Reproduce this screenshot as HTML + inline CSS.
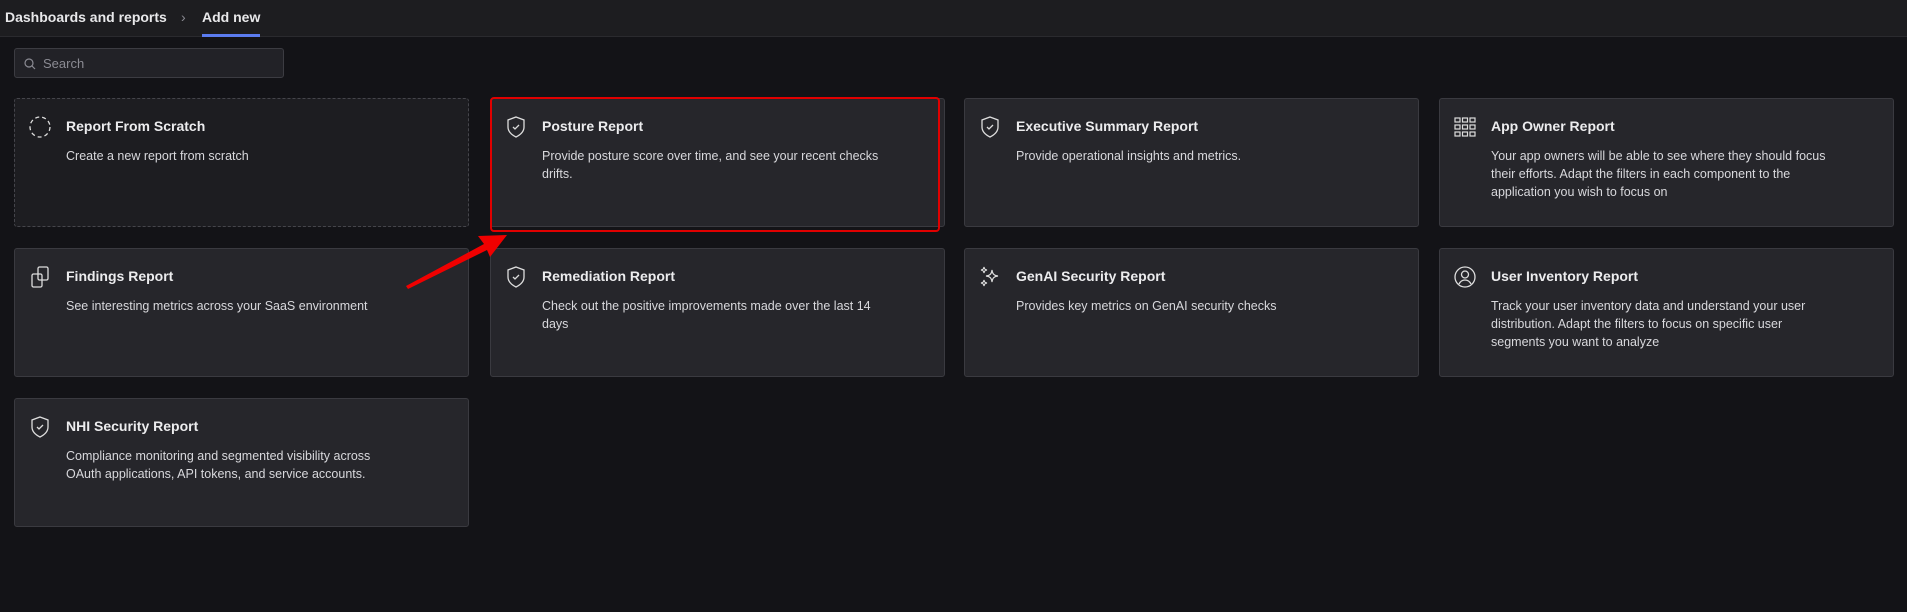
<!DOCTYPE html>
<html><head><meta charset="utf-8"><style>
*{box-sizing:border-box;margin:0;padding:0}
body{width:1907px;height:612px;background:#131317;font-family:"Liberation Sans",sans-serif;color:#e6e6e9;position:relative;overflow:hidden}
.hdr{position:absolute;left:0;top:0;width:1907px;height:37px;background:#1d1d20;border-bottom:1px solid #2a2a2e}
.bc{position:absolute;top:9px;font-size:14px;font-weight:bold;color:#e8e8ea}
.ul{position:absolute;left:202px;top:34px;width:58px;height:3px;background:#5b7cf0}
.search{position:absolute;left:14px;top:48px;width:270px;height:30px;background:#222227;border:1px solid #3c3c42;border-radius:3px}
.search span{position:absolute;left:28px;top:7px;font-size:13px;color:#8b8b93}
.card{position:absolute;width:455px;height:129px;background:#26262b;border:1px solid #3a3a40;border-radius:3px}
.card.dash{background:#1d1d21;border:1px dashed #45454b}
.card svg{position:absolute;left:13px;top:16px}
.t{position:absolute;left:51px;top:19px;font-size:14px;font-weight:bold;color:#ececee}
.d{position:absolute;left:51px;top:48px;width:400px;white-space:nowrap;font-size:12.5px;line-height:18px;color:#d8d8dc}
</style></head><body>
<div class="hdr"></div>
<div class="bc" style="left:5px">Dashboards and reports</div>
<div class="bc" style="left:181px;font-weight:normal;color:#8b8b93">&#x203A;</div>
<div class="bc" style="left:202px">Add new</div>
<div class="ul"></div>
<div class="search"><svg width="12" height="12" viewBox="0 0 12 12" style="position:absolute;left:9px;top:9px"><circle cx="5" cy="5" r="4" fill="none" stroke="#8b8b93" stroke-width="1.2"/><path d="M8 8l3 3" stroke="#8b8b93" stroke-width="1.2"/></svg><span>Search</span></div>

<div class="card dash" style="left:14px;top:98px"><svg width="24" height="24" viewBox="0 0 24 24"><circle cx="12" cy="12" r="10" fill="none" stroke="#ddd" stroke-width="1.3" stroke-dasharray="4 3"/></svg><div class="t">Report From Scratch</div><div class="d">Create a new report from scratch</div></div>

<div class="card" style="left:490px;top:98px"><svg width="24" height="24" viewBox="0 0 24 24"><path d="M12 2l8 3v7c0 5-4 8-8 10-4-2-8-5-8-10V5z" fill="none" stroke="#ddd" stroke-width="1.3"/><path d="M9 12l2 2 4-4" fill="none" stroke="#ddd" stroke-width="1.3"/></svg><div class="t">Posture Report</div><div class="d">Provide posture score over time, and see your recent checks<br>drifts.</div></div>

<div class="card" style="left:964px;top:98px"><svg width="24" height="24" viewBox="0 0 24 24"><path d="M12 2l8 3v7c0 5-4 8-8 10-4-2-8-5-8-10V5z" fill="none" stroke="#ddd" stroke-width="1.3"/><path d="M9 12l2 2 4-4" fill="none" stroke="#ddd" stroke-width="1.3"/></svg><div class="t">Executive Summary Report</div><div class="d">Provide operational insights and metrics.</div></div>

<div class="card" style="left:1439px;top:98px"><svg width="24" height="24" viewBox="0 0 24 24" fill="none" stroke="#ddd" stroke-width="1.2"><rect x="2" y="3" width="5" height="4"/><rect x="9.5" y="3" width="5" height="4"/><rect x="17" y="3" width="5" height="4"/><rect x="2" y="10" width="5" height="4"/><rect x="9.5" y="10" width="5" height="4"/><rect x="17" y="10" width="5" height="4"/><rect x="2" y="17" width="5" height="4"/><rect x="9.5" y="17" width="5" height="4"/><rect x="17" y="17" width="5" height="4"/></svg><div class="t">App Owner Report</div><div class="d">Your app owners will be able to see where they should focus<br>their efforts. Adapt the filters in each component to the<br>application you wish to focus on</div></div>

<div class="card" style="left:14px;top:248px"><svg width="24" height="24" viewBox="0 0 24 24" fill="none" stroke="#ddd" stroke-width="1.3"><rect x="10" y="2" width="10" height="13" rx="1.5"/><rect x="4" y="9" width="10" height="13" rx="1.5"/></svg><div class="t">Findings Report</div><div class="d">See interesting metrics across your SaaS environment</div></div>

<div class="card" style="left:490px;top:248px"><svg width="24" height="24" viewBox="0 0 24 24"><path d="M12 2l8 3v7c0 5-4 8-8 10-4-2-8-5-8-10V5z" fill="none" stroke="#ddd" stroke-width="1.3"/><path d="M9 12l2 2 4-4" fill="none" stroke="#ddd" stroke-width="1.3"/></svg><div class="t">Remediation Report</div><div class="d">Check out the positive improvements made over the last 14<br>days</div></div>

<div class="card" style="left:964px;top:248px"><svg width="24" height="24" viewBox="0 0 24 24" fill="none" stroke="#ddd" stroke-width="1.2"><path d="M14 5c.5 4 2 5.5 6 6-4 .5-5.5 2-6 6-.5-4-2-5.5-6-6 4-.5 5.5-2 6-6z"/><path d="M6 2c.3 2 1 2.7 3 3-2 .3-2.7 1-3 3-.3-2-1-2.7-3-3 2-.3 2.7-1 3-3z"/><path d="M6 15c.3 2 1 2.7 3 3-2 .3-2.7 1-3 3-.3-2-1-2.7-3-3 2-.3 2.7-1 3-3z"/></svg><div class="t">GenAI Security Report</div><div class="d">Provides key metrics on GenAI security checks</div></div>

<div class="card" style="left:1439px;top:248px"><svg width="24" height="24" viewBox="0 0 24 24" fill="none" stroke="#ddd" stroke-width="1.3"><circle cx="12" cy="12" r="10"/><circle cx="12" cy="9.5" r="3.5"/><path d="M6 19c1.5-3 3.5-4 6-4s4.5 1 6 4"/></svg><div class="t">User Inventory Report</div><div class="d">Track your user inventory data and understand your user<br>distribution. Adapt the filters to focus on specific user<br>segments you want to analyze</div></div>

<div class="card" style="left:14px;top:398px"><svg width="24" height="24" viewBox="0 0 24 24"><path d="M12 2l8 3v7c0 5-4 8-8 10-4-2-8-5-8-10V5z" fill="none" stroke="#ddd" stroke-width="1.3"/><path d="M9 12l2 2 4-4" fill="none" stroke="#ddd" stroke-width="1.3"/></svg><div class="t">NHI Security Report</div><div class="d">Compliance monitoring and segmented visibility across<br>OAuth applications, API tokens, and service accounts.</div></div>

<div style="position:absolute;left:490px;top:97px;width:450px;height:135px;border:2px solid #e00000;border-radius:4px"></div>
<svg width="1907" height="612" style="position:absolute;left:0;top:0"><polygon points="507,235 478,236 484,244 406,286 408,289 487,250 490,257" fill="#f00000"/></svg>
</body></html>
